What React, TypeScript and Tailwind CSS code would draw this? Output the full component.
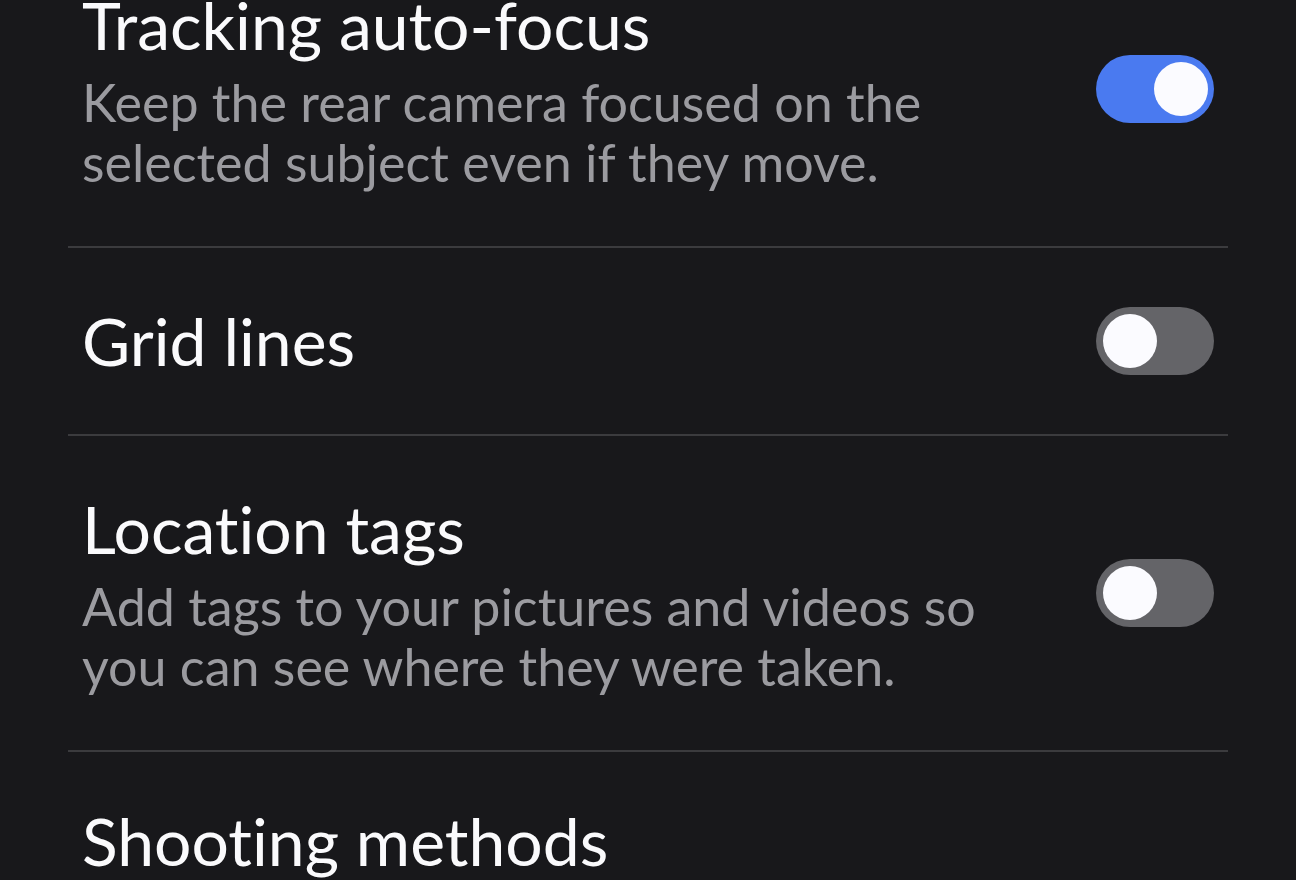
type Item = { title: string; desc?: string; on?: boolean; toggle?: boolean };

const items: Item[] = [
  { title: "Tracking auto-focus", desc: "Keep the rear camera focused on the selected subject even if they move.", on: true, toggle: true },
  { title: "Grid lines", on: false, toggle: true },
  { title: "Location tags", desc: "Add tags to your pictures and videos so you can see where they were taken.", on: false, toggle: true },
  { title: "Shooting methods" },
];

function Toggle({ on }: { on: boolean }) {
  return (
    <div
      className={
        on
          ? "flex h-[68px] w-[118px] shrink-0 items-center justify-end rounded-full bg-[#4a7af0] px-[6px]"
          : "flex h-[68px] w-[118px] shrink-0 items-center justify-start rounded-full bg-[#646468] px-[7px]"
      }
    >
      <div className="h-[54px] w-[54px] rounded-full bg-[#fbfbff]" />
    </div>
  );
}

function Row({ item, last }: { item: Item; last?: boolean }) {
  return (
    <div className={last ? "flex items-start pl-[82px] pr-[82px] pt-[50px]" : "flex items-center pl-[82px] pr-[82px] py-[54px]"}>
      <div className="flex w-[984px] flex-col">
        <div className="text-[66px] leading-[78px] text-[#fafafc]">{item.title}</div>
        {item.desc && (
          <div className="mt-[8px] text-[52px] leading-[60px] text-[#9b9ba0]">{item.desc}</div>
        )}
      </div>
      <div className="flex flex-1 justify-end">{item.toggle && <Toggle on={!!item.on} />}</div>
    </div>
  );
}

function Divider() {
  return <div className="mx-[68px] h-[2px] bg-[#3b3b3e]" />;
}

export default function App() {
  return (
    <div
      className="h-[880px] w-[1296px] overflow-hidden bg-[#18181b] [font-variant-ligatures:none]"
      style={{ fontFamily: "Lato, 'Noto Sans', sans-serif" }}
    >
      <div className="-mt-[68px] flex flex-col">
        {items.map((it, i) => (
          <div key={it.title}>
            <Row item={it} last={i === items.length - 1} />
            {i < items.length - 1 && <Divider />}
          </div>
        ))}
      </div>
    </div>
  );
}
